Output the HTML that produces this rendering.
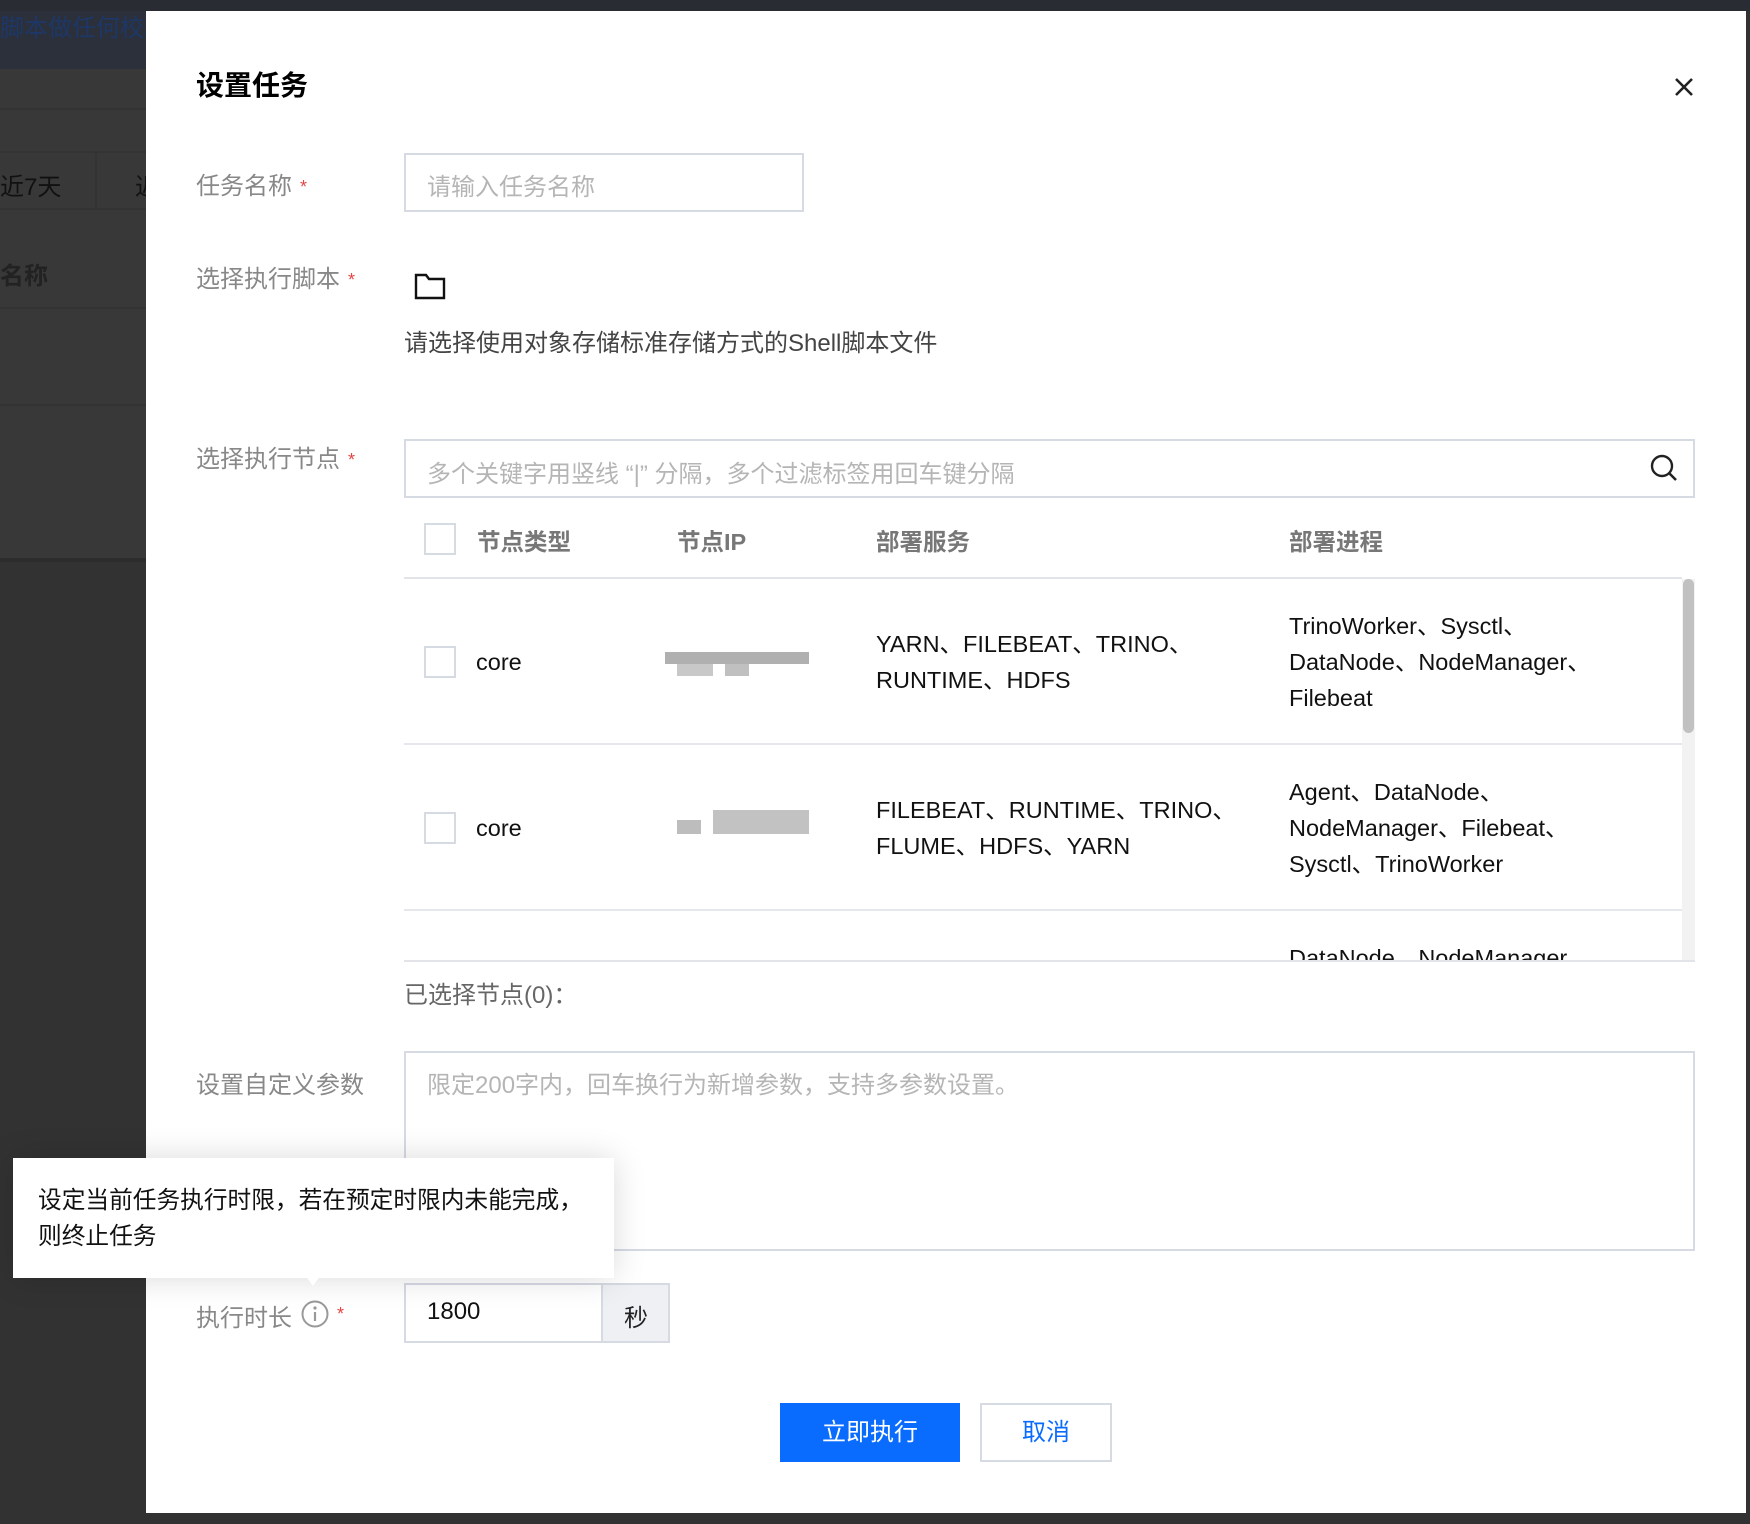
<!DOCTYPE html>
<html><head><meta charset="utf-8"><style>
*{margin:0;padding:0;box-sizing:border-box}
body{width:1750px;height:1524px;background:#323232;position:relative;overflow:hidden;font-family:"Liberation Sans","Noto Sans CJK SC",sans-serif}
.a{position:absolute;white-space:nowrap}
.lbl{font-size:24px;color:#888}
.req{color:#e54545;font-size:18px;margin-left:8px;vertical-align:middle}
.inp{position:absolute;border:2px solid #d6dae3;background:#fff}
.ph{color:#b5b5b5;font-size:24px}
.cb{position:absolute;width:32px;height:32px;border:2px solid #d6dae3;background:#fff}
.cell{position:absolute;font-size:23.5px;line-height:36px;color:#111}
.hd{font-size:23.5px;font-weight:bold;color:#777}
.px{position:absolute;background:#aaa}
</style></head><body>
<div class="a" style="left:0;top:0;width:1750px;height:11px;background:#2a2c33"></div>
<div class="a" style="left:0;top:11px;width:146px;height:58px;background:#2b303b"></div>
<div class="a" style="left:0;top:8px;font-size:24px;color:#1d3767">脚本做任何校验</div>
<div class="a" style="left:0;top:69px;width:146px;height:489px;background:#383838"></div>
<div class="a" style="left:0;top:108px;width:146px;height:2px;background:#333"></div>
<div class="a" style="left:0;top:151px;width:146px;height:2px;background:#333"></div>
<div class="a" style="left:0;top:208px;width:146px;height:2px;background:#333"></div>
<div class="a" style="left:95px;top:153px;width:2px;height:55px;background:#333"></div>
<div class="a" style="left:0;top:167px;font-size:24px;color:#111">近7天</div>
<div class="a" style="left:135px;top:167px;font-size:24px;color:#111">近</div>
<div class="a" style="left:0;top:256px;font-size:24px;color:#222;font-weight:bold">名称</div>
<div class="a" style="left:0;top:307px;width:146px;height:2px;background:#333"></div>
<div class="a" style="left:0;top:404px;width:146px;height:2px;background:#333"></div>
<div class="a" style="left:0;top:558px;width:146px;height:4px;background:#2c2c2c"></div>

<div class="a" style="left:146px;top:11px;width:1600px;height:1502px;background:#fff"></div>
<div class="a" style="left:196px;top:64px;font-size:28px;font-weight:bold;color:#000">设置任务</div>
<svg class="a" style="left:1674px;top:77px" width="20" height="20" viewBox="0 0 20 20"><path d="M2 2L18 18M18 2L2 18" stroke="#222" stroke-width="2.6"/></svg>

<div class="a lbl" style="left:196px;top:166px">任务名称<span class="req">*</span></div>
<div class="inp" style="left:404px;top:153px;width:400px;height:59px"><span class="a ph" style="left:21px;top:12px">请输入任务名称</span></div>

<div class="a lbl" style="left:196px;top:259px">选择执行脚本<span class="req">*</span></div>
<svg class="a" style="left:414px;top:272px" width="32" height="28" viewBox="0 0 32 28"><path d="M2 3H12L15 7H30V26H2Z" fill="none" stroke="#111" stroke-width="2.4"/></svg>
<div class="a" style="left:404px;top:323px;font-size:24px;color:#444">请选择使用对象存储标准存储方式的Shell脚本文件</div>

<div class="a lbl" style="left:196px;top:439px">选择执行节点<span class="req">*</span></div>
<div class="inp" style="left:404px;top:439px;width:1291px;height:59px"><span class="a ph" style="left:21px;top:13px">多个关键字用竖线 “|” 分隔，多个过滤标签用回车键分隔</span></div>
<svg class="a" style="left:1649px;top:453px" width="30" height="30" viewBox="0 0 30 30"><circle cx="13" cy="13" r="10" fill="none" stroke="#222" stroke-width="2.4"/><path d="M20.5 20.5L27 27" stroke="#222" stroke-width="2.6"/></svg>

<div class="cb" style="left:424px;top:523px"></div>
<div class="a hd" style="left:477px;top:523px">节点类型</div>
<div class="a hd" style="left:677px;top:523px">节点IP</div>
<div class="a hd" style="left:876px;top:523px">部署服务</div>
<div class="a hd" style="left:1289px;top:523px">部署进程</div>
<div class="a" style="left:404px;top:577px;width:1278px;height:2px;background:#e2e4ea"></div>

<div class="a" style="left:404px;top:579px;width:1291px;height:381px;overflow:hidden">
 <div class="cb" style="left:20px;top:67px"></div>
 <div class="cell" style="left:72px;top:65px">core</div>
 <div class="px" style="left:261px;top:73px;width:144px;height:12px;background:#b0b0b0"></div>
 <div class="px" style="left:273px;top:85px;width:36px;height:12px;background:#c8c8c8"></div>
 <div class="px" style="left:321px;top:85px;width:24px;height:12px;background:#c0c0c0"></div>
 <div class="cell" style="left:472px;top:47px">YARN、FILEBEAT、TRINO、<br>RUNTIME、HDFS</div>
 <div class="cell" style="left:885px;top:29px">TrinoWorker、Sysctl、<br>DataNode、NodeManager、<br>Filebeat</div>
 <div class="a" style="left:0;top:164px;width:1278px;height:2px;background:#e6e7ec"></div>
 <div class="cb" style="left:20px;top:233px"></div>
 <div class="cell" style="left:72px;top:231px">core</div>
 <div class="px" style="left:273px;top:241px;width:24px;height:14px;background:#bdbdbd"></div>
 <div class="px" style="left:309px;top:231px;width:96px;height:24px;background:#c2c2c2"></div>
 <div class="cell" style="left:472px;top:213px">FILEBEAT、RUNTIME、TRINO、<br>FLUME、HDFS、YARN</div>
 <div class="cell" style="left:885px;top:195px">Agent、DataNode、<br>NodeManager、Filebeat、<br>Sysctl、TrinoWorker</div>
 <div class="a" style="left:0;top:330px;width:1278px;height:2px;background:#e6e7ec"></div>
 <div class="cell" style="left:885px;top:361px">DataNode、NodeManager、</div>
 <div class="a" style="left:1278px;top:0;width:13px;height:381px;background:#f2f2f2"></div>
 <div class="a" style="left:1279px;top:0;width:11px;height:154px;background:#c1c1c1;border-radius:6px"></div>
</div>
<div class="a" style="left:404px;top:960px;width:1291px;height:2px;background:#e2e4ea"></div>
<div class="a" style="left:404px;top:975px;font-size:24px;color:#666">已选择节点(0)：</div>

<div class="a lbl" style="left:196px;top:1065px">设置自定义参数</div>
<div class="inp" style="left:404px;top:1051px;width:1291px;height:200px"><span class="a ph" style="left:21px;top:12px">限定200字内，回车换行为新增参数，支持多参数设置。</span></div>

<div class="a lbl" style="left:196px;top:1298px">执行时长</div>
<svg class="a" style="left:300px;top:1299px" width="30" height="30" viewBox="0 0 30 30"><circle cx="15" cy="15" r="12.5" fill="none" stroke="#999" stroke-width="2"/><circle cx="15" cy="9" r="1.6" fill="#999"/><path d="M15 13V22" stroke="#999" stroke-width="2.2"/></svg>
<div class="a" style="left:337px;top:1304px;color:#e54545;font-size:18px">*</div>
<div class="inp" style="left:404px;top:1283px;width:266px;height:60px;background:#eef0f3"><div class="a" style="left:0;top:0;width:197px;height:56px;background:#fff;border-right:2px solid #d6dae3"></div><span class="a" style="left:21px;top:13px;font-size:24px;color:#111">1800</span><span class="a" style="left:218px;top:13px;font-size:24px;color:#222">秒</span></div>

<div class="a" style="left:780px;top:1403px;width:180px;height:59px;background:#0a6cff;color:#fff;font-size:24px;text-align:center;line-height:59px">立即执行</div>
<div class="a" style="left:980px;top:1403px;width:132px;height:59px;border:2px solid #d6dae3;color:#0a6cff;font-size:24px;text-align:center;line-height:55px">取消</div>

<div class="a" style="left:13px;top:1158px;width:601px;height:120px;background:#fff;box-shadow:0 0 30px rgba(0,0,0,.15)"></div>
<div class="a" style="left:303px;top:1272px;width:0;height:0;border-left:10px solid transparent;border-right:10px solid transparent;border-top:14px solid #fff"></div>
<div class="a" style="left:38px;top:1183px;font-size:23.7px;line-height:36px;color:#111">设定当前任务执行时限，若在预定时限内未能完成，<br>则终止任务</div>
</body></html>
